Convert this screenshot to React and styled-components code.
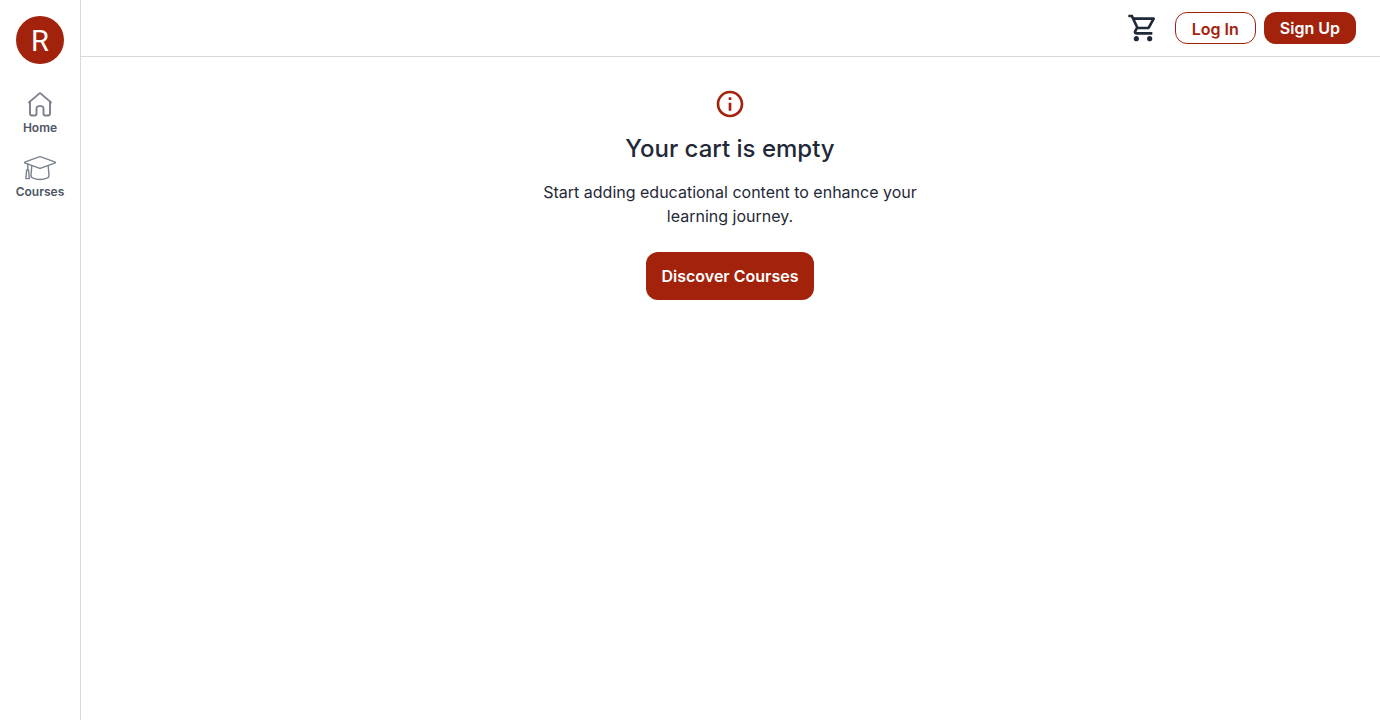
import React from "react";
import styled, { createGlobalStyle } from "styled-components";

const brand = "#a3220b";
const ink = "#1f2937";
const line = "#d9d9dc";

const GlobalStyle = createGlobalStyle`
  *, *::before, *::after { box-sizing: border-box; }
  body {
    margin: 0;
    background: #fff;
    color: ${ink};
    font-family: Inter, "Liberation Sans", sans-serif;
  }
  svg { display: block; }
`;

const Page = styled.div`
  display: flex;
  min-height: 100vh;
`;

const Sidebar = styled.aside`
  width: 81px;
  flex-shrink: 0;
  padding: 16px 0;
  border-right: 1px solid ${line};
  display: flex;
  flex-direction: column;
  align-items: center;
`;

const Logo = styled.a`
  width: 48px;
  height: 48px;
  border-radius: 50%;
  background: ${brand};
  color: #fff;
  font: 400 29px/50px Roboto, sans-serif;
  text-align: center;
`;

const Nav = styled.nav`
  margin-top: 24px;
  display: flex;
  flex-direction: column;
  gap: 16px;
`;

const NavItem = styled.a`
  height: 48px;
  display: flex;
  flex-direction: column;
  align-items: center;
  color: #7a808c;
`;

const NavLabel = styled.span`
  font-size: 12px;
  line-height: 16px;
  font-weight: 600;
  color: #4b5563;
`;

const Column = styled.div`
  flex: 1;
`;

const Header = styled.header`
  height: 57px;
  padding: 0 24px;
  border-bottom: 1px solid ${line};
  display: flex;
  align-items: center;
  justify-content: flex-end;
`;

const CartLink = styled.a`
  margin-right: 16px;
  color: ${ink};
`;

const Actions = styled.div`
  display: flex;
  gap: 8px;
`;

const Button = styled.button`
  height: ${(p) => (p.$large ? 48 : 32)}px;
  padding: ${(p) => (p.$outline ? "2px 16px 0" : "0 16px")};
  border: ${(p) => (p.$outline ? `1px solid ${brand}` : "0")};
  border-radius: 12px;
  background: ${(p) => (p.$outline ? "#fff" : brand)};
  color: ${(p) => (p.$outline ? brand : "#fff")};
  font: 600 16px/24px Inter, "Liberation Sans", sans-serif;
`;

const Main = styled.main`
  padding: 31px 1px 0 0;
  display: flex;
  flex-direction: column;
  align-items: center;
  text-align: center;
`;

const Title = styled.h1`
  margin: 13px 0 0;
  font-size: 24px;
  line-height: 32px;
  font-weight: 500;
`;

const Message = styled.p`
  width: 400px;
  margin: 15px 0 24px;
  font-size: 16px;
  line-height: 24px;
`;

const HomeIcon = () => (
  <svg width="32" height="32" viewBox="0 0 32 32" fill="none" stroke="currentColor" strokeWidth="1.9" strokeLinecap="round" strokeLinejoin="round">
    <path d="M5 14.400 15.200 5.600a1.200 1.200 0 0 1 1.600 0L27 14.400" />
    <path d="M6 13.500v12a2 2 0 0 0 2 2h2.700a1.800 1.800 0 0 0 1.800-1.800v-5.200a2.400 2.400 0 0 1 2.400-2.400h2.200a2.400 2.400 0 0 1 2.400 2.400v5.200a1.800 1.800 0 0 0 1.800 1.800H24a2 2 0 0 0 2-2v-12" />
  </svg>
);

const CoursesIcon = () => (
  <svg width="32" height="32" viewBox="0 0 32 32" fill="none" stroke="currentColor" strokeWidth="1.4" strokeLinecap="round" strokeLinejoin="round">
    <path d="M15.200 4.800a2.400 2.400 0 0 1 1.600 0l13.900 5c.9.3.9 1.100 0 1.400l-13.900 5a2.400 2.400 0 0 1-1.600 0l-13.900-5c-.9-.3-.9-1.100 0-1.400z" />
    <path d="M7.800 13.700 7 23.500c-.1 1.100.5 2 1.500 2.400 4.500 1.900 10.500 1.900 15 0 1-.4 1.600-1.300 1.500-2.400l-.8-9.800" />
    <path d="M3.800 12v6M2.700 18h1.900l.7 8.600H1.800z" />
  </svg>
);

const CartIcon = () => (
  <svg width="32" height="32" viewBox="0 0 24 24" fill="currentColor">
    <path d="M15.550 13c.75 0 1.410-.41 1.750-1.030l3.580-6.490A.996.996 0 0 0 20.010 4H5.210l-.94-2H1v2h2l3.600 7.590-1.350 2.440C4.520 15.370 5.480 17 7 17h12v-2H7l1.100-2h7.450zM6.160 6h12.150l-2.760 5H8.530L6.160 6zM7 18c-1.100 0-1.990.9-1.990 2S5.900 22 7 22s2-.9 2-2-.9-2-2-2zm10 0c-1.100 0-1.990.9-1.990 2s.89 2 1.990 2 2-.9 2-2-.9-2-2-2z" />
  </svg>
);

const InfoIcon = () => (
  <svg width="32" height="32" viewBox="0 0 24 24" fill={brand}>
    <path d="M11 7h2v2h-2zm0 4h2v6h-2zm1-9C6.480 2 2 6.480 2 12s4.480 10 10 10 10-4.480 10-10S17.520 2 12 2zm0 18c-4.410 0-8-3.590-8-8s3.590-8 8-8 8 3.590 8 8-3.590 8-8 8z" />
  </svg>
);

export default function App() {
  return (
    <>
      <GlobalStyle />
      <Page>
        <Sidebar>
          <Logo>R</Logo>
          <Nav>
            <NavItem>
              <HomeIcon />
              <NavLabel>Home</NavLabel>
            </NavItem>
            <NavItem>
              <CoursesIcon />
              <NavLabel>Courses</NavLabel>
            </NavItem>
          </Nav>
        </Sidebar>
        <Column>
          <Header>
            <CartLink aria-label="Cart">
              <CartIcon />
            </CartLink>
            <Actions>
              <Button $outline>Log In</Button>
              <Button>Sign Up</Button>
            </Actions>
          </Header>
          <Main>
            <InfoIcon />
            <Title>Your cart is empty</Title>
            <Message>Start adding educational content to enhance your learning journey.</Message>
            <Button $large>Discover Courses</Button>
          </Main>
        </Column>
      </Page>
    </>
  );
}
